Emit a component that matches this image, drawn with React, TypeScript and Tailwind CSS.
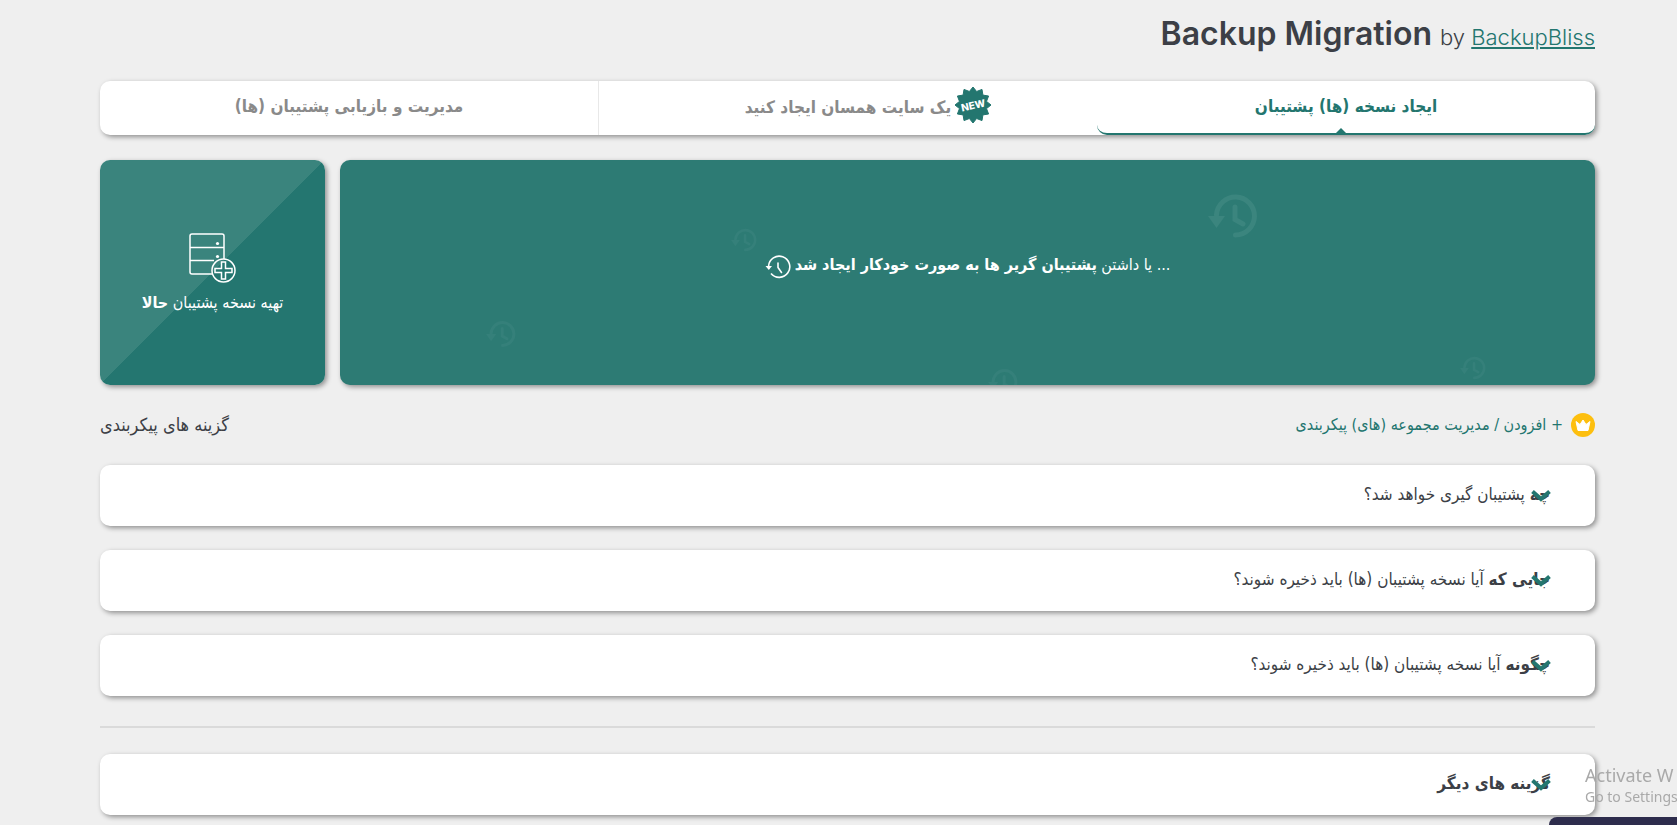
import React from "react";

const fa = "font-['DejaVu_Sans_Condensed','DejaVu_Sans',sans-serif]";

const Clock = ({ className }: { className: string }) => (
  <svg viewBox="0 0 26 24" className={className} fill="none" stroke="currentColor" strokeWidth="1.600" aria-hidden="true">
    <path d="M3.600 11A10.600 10.600 0 1 1 6 18.500" />
    <path d="M13 8v4.500l3.500 5" strokeWidth="1.600" strokeLinecap="round" />
    <path d="M.5 11h6.500l-3.200 4z" fill="currentColor" stroke="none" />
  </svg>
);

const GhostClock = ({ className }: { className: string }) => (
  <svg viewBox="0 0 50 44" className={className} fill="none" stroke="currentColor" strokeWidth="5" aria-hidden="true">
    <path d="M8.500 21A19 19 0 1 1 27.500 41" strokeLinecap="round" />
    <path d="M27 13v12.500l8 4.500" strokeLinecap="round" />
    <path d="M0 22h17l-8.500 12z" fill="currentColor" stroke="none" />
  </svg>
);

const starPoints = Array.from({ length: 24 }, (_, i) => {
  const r = i % 2 === 0 ? 18 : 14;
  const a = (i * Math.PI) / 12;
  return `${(18 + r * Math.sin(a)).toFixed(2)},${(18 - r * Math.cos(a)).toFixed(2)}`;
}).join(" ");

const NewBadge = () => (
  <svg viewBox="0 0 36 36" className="absolute -right-10 -top-2 size-9" role="img" aria-label="NEW">
    <polygon points={starPoints} fill="#23766f" stroke="#23766f" strokeLinejoin="round" />
    <text x="18" y="22" textAnchor="middle" transform="rotate(-12 18 18)" fill="#fff" fontSize="10" fontWeight="800" fontFamily="Inter, sans-serif">NEW</text>
  </svg>
);

const ServerPlus = () => (
  <svg viewBox="0 0 48 52" className="h-[52px] w-12" fill="none" stroke="#fff" strokeWidth="1.500" aria-hidden="true">
    <path d="M23 41H3a2 2 0 0 1-2-2V3a2 2 0 0 1 2-2h30a2 2 0 0 1 2 2v23M1 14.500h34M1 27.500h24" />
    <circle cx="28.500" cy="10.500" r="1.600" fill="#fff" stroke="none" />
    <circle cx="28.500" cy="23.500" r="1.600" fill="#fff" stroke="none" />
    <circle cx="34.500" cy="37.500" r="11.500" />
    <path d="M32.500 29h4v6.500h6.500v4h-6.500V46h-4v-6.500H26v-4h6.500z" />
  </svg>
);

const Crown = () => (
  <svg viewBox="0 0 24 24" className="size-6" aria-hidden="true">
    <circle cx="12" cy="12" r="12" fill="#fdbf0f" />
    <path d="M7 17.500 5 8.500l4 3 3-4.500 3 4.500 4-3-2 9z" fill="#fff" stroke="#fff" strokeLinejoin="round" />
  </svg>
);

const shadow = "shadow-[2px_2px_5px_rgba(0,0,0,0.4)]";

const Panel = ({ bold, text }: { bold: string; text?: string }) => (
  <button type="button" className={`relative flex h-[61px] w-full items-center rounded-[10px] bg-white px-[45px] pb-0.5 text-[17px] text-[#3c3f46] ${shadow}`}>
    <span>
      <b>{bold}</b>
      {text ? " " + text : ""}
    </span>
    <svg viewBox="0 0 20 12" className="absolute right-11 top-[25px] h-3 w-5" fill="none" stroke="#23766f" strokeWidth="4" aria-hidden="true">
      <path d="M1.500 1.500 10 9l8.500-7.500" />
    </svg>
  </button>
);

const tab = "relative flex flex-1 items-center justify-center text-[17px] font-bold";

export default function App() {
  return (
    <div dir="rtl" className={`min-h-screen overflow-hidden bg-[#efefef] pl-[100px] pr-[82px] text-[#3c3f46] ${fa}`}>
      <header dir="ltr" className="flex h-[81px] items-baseline justify-end gap-2 pt-[14px] font-['Inter',sans-serif]">
        <h1 className="text-[32px] leading-10 font-semibold">Backup Migration</h1>
        <p className="text-[22px] font-light">
          by <a href="#" className="text-[#23766f] underline decoration-2 underline-offset-2">BackupBliss</a>
        </p>
      </header>

      <nav className={`flex h-[54px] rounded-[10px] bg-white text-[#8a8a8a] ${shadow}`}>
        <button type="button" className={`${tab} rounded-b-[10px] border-b-2 border-[#23766f] text-[#23766f]`}>
          ایجاد نسخه (ها) پشتیبان
          <svg viewBox="0 0 10 5" className="absolute bottom-0 left-1/2 h-[5px] w-2.5 -translate-x-full" aria-hidden="true">
            <path d="M0 5 5 0l5 5z" fill="#23766f" />
          </svg>
        </button>
        <button type="button" className={`${tab} pb-0.5`}>
          <span className="relative leading-6">
            <NewBadge />
            یک سایت همسان ایجاد کنید
          </span>
        </button>
        <button type="button" className={`${tab} border-r border-[#e8e8e8] pb-0.5`}>مدیریت و بازیابی پشتیبان (ها)</button>
      </nav>

      <section className="mt-[25px] flex h-[225px] gap-[15px] text-white">
        <button type="button" className={`relative flex flex-1 items-center justify-center gap-1 overflow-hidden rounded-[10px] bg-[#2d7b74] pb-4 text-base ${shadow}`}>
          <GhostClock className="absolute left-[868px] top-[34px] h-11 w-[50px] text-[#3b857e]" />
          <GhostClock className="absolute left-[391px] top-[68px] h-6 w-[26px] text-[#35807a]" />
          <GhostClock className="absolute left-[146px] top-[160px] h-7 w-[30px] text-[#35807a]" />
          <GhostClock className="absolute left-[648px] top-[208px] h-7 w-[30px] text-[#35807a]" />
          <GhostClock className="absolute left-[1120px] top-[196px] h-6 w-[26px] text-[#35807a]" />
          <span>... یا داشتن <b>پشتیبان گریر ها به صورت خودکار ایجاد شد</b></span>
          <Clock className="mt-1 h-6 w-[26px]" />
        </button>
        <button type="button" className={`flex w-[225px] flex-col items-center justify-center gap-2 rounded-[10px] bg-[linear-gradient(135deg,#3a847d_50%,#247670_50%)] text-base ${shadow}`}>
          <ServerPlus />
          <span className="leading-5">تهیه نسخه پشتیبان <b>حالا</b></span>
        </button>
      </section>

      <div className="flex h-20 items-center justify-between">
        <a href="#" className="flex items-center gap-2 text-base text-[#23766f]">
          <Crown />
          + افزودن / مدیریت مجموعه (های) پیکربندی
        </a>
        <h2 className="text-lg">گزینه های پیکربندی</h2>
      </div>

      <main className="flex flex-col gap-6">
        <Panel bold="چه" text="پشتیبان گیری خواهد شد؟" />
        <Panel bold="جایی که" text="آیا نسخه پشتیبان (ها) باید ذخیره شوند؟" />
        <Panel bold="چگونه" text="آیا نسخه پشتیبان (ها) باید ذخیره شوند؟" />
        <hr className="mt-1.5 mb-0.5 border-t-2 border-[#dadada]" />
        <Panel bold="گزینه های دیگر" />
      </main>

      <aside dir="ltr" className="fixed right-0 bottom-0 flex w-[128px] flex-col overflow-hidden whitespace-nowrap text-[#a9a9a9] font-['Noto_Sans',sans-serif]">
        <p className="pl-9 text-lg leading-6">Activate W</p>
        <p className="pl-9 text-sm leading-5">Go to Settings</p>
        <div className="mt-2.5 h-2 rounded-tl-lg bg-[#2e2d4d]" />
      </aside>
    </div>
  );
}
